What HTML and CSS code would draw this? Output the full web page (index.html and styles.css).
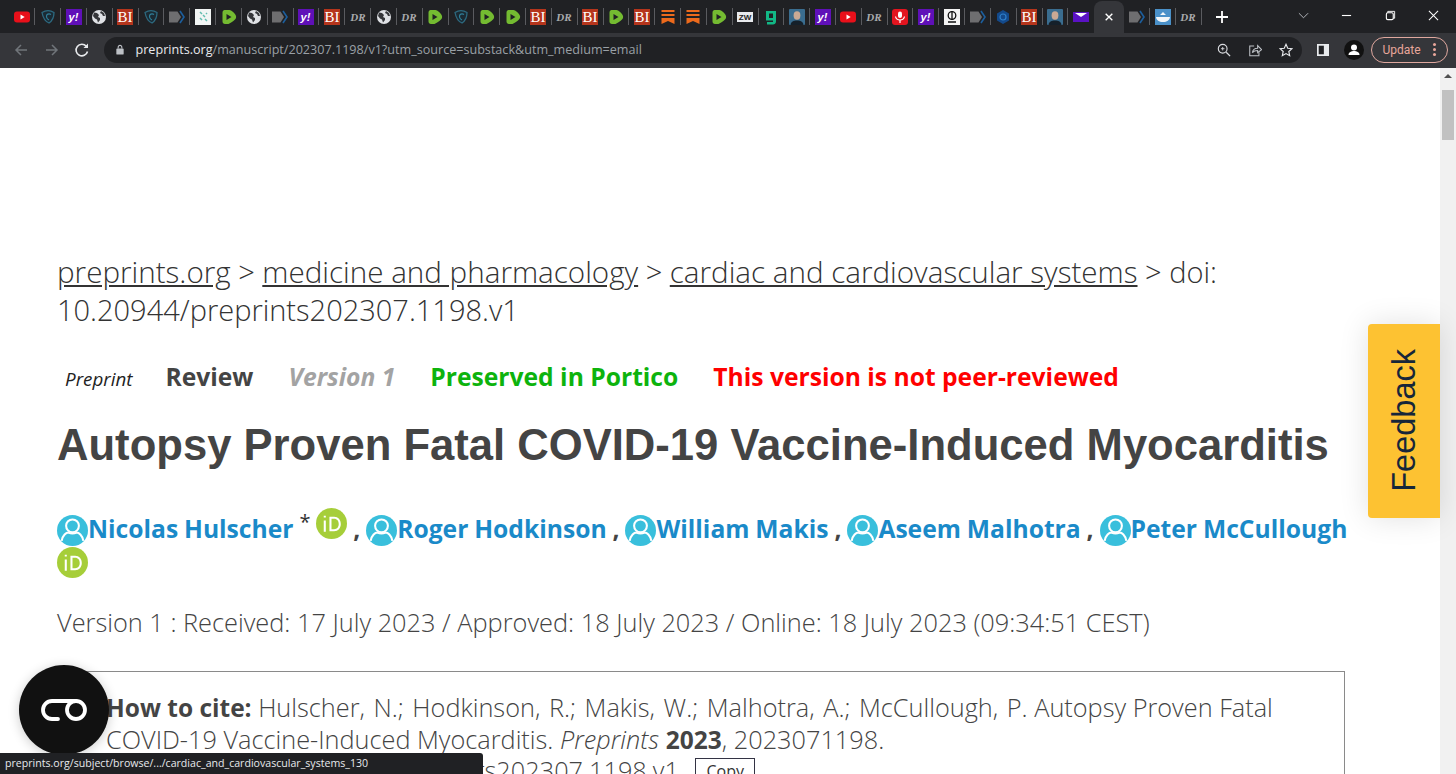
FILE: index.html
```html
<!DOCTYPE html>
<html lang="en">
<head>
    <meta charset="UTF-8">
    <meta name="viewport" content="width=device-width, initial-scale=1.0">
    <title>Autopsy Proven Fatal COVID-19 Vaccine-Induced Myocarditis</title>
    <link rel="stylesheet" href="styles.css">
</head>
<body>
    <svg class="sprites" width="0" height="0">
        <symbol id="yt" viewBox="0 0 16 16"><rect y="2.500" width="16" height="11" rx="3" fill="#e8101a"/><path d="M6.500 5.600l4.200 2.400-4.200 2.400z" fill="#fff"/></symbol>
        <symbol id="shield" viewBox="0 0 16 16"><path d="M2 3.500c4-2.500 8-2.500 12 0 0 5-2 8.500-5 10.500C5 12.500 3 9 2 3.500z" fill="#1b2a33" stroke="#2d6a80" stroke-width="1.300"/><path d="M11 5.500c-2-1.200-5-.5-4.500 2.500.3 1.500 1.500 2.500 2.500 3" fill="none" stroke="#2f7f99" stroke-width="1.200"/></symbol>
        <symbol id="yahoo" viewBox="0 0 16 16"><rect width="16" height="16" fill="#5f10b8"/><text x="7.500" y="12" text-anchor="middle" class="ico-y">y!</text></symbol>
        <symbol id="globe" viewBox="0 0 16 16"><circle cx="8" cy="8" r="7" fill="#dfe1e5"/><path d="M3 3.500l3 .5 2 2-1 2 2 1v2l-2 2.500-1-3-2-1-2-2.500zM10 2l3 2 1 3-2 0-1-2-2-1z" fill="#35363a"/></symbol>
        <symbol id="bi" viewBox="0 0 16 16"><rect width="16" height="16" fill="#b5351c"/><text x="8" y="13" text-anchor="middle" class="ico-bi">BI</text></symbol>
        <symbol id="chev" viewBox="0 0 16 16"><path d="M0 2.500h8.500l3.500 5.500-3.500 5.500H0z" fill="#6e6e70"/><path d="M11 2l4 6-4 6" fill="none" stroke="#1c5f9e" stroke-width="1.600"/></symbol>
        <symbol id="gem" viewBox="0 0 16 16"><rect width="16" height="16" fill="#f2f5f4"/><path d="M5 3l2 2M8 6l2 2M5 9l2 2M10 10l2 2M11 4l1 1" stroke="#62bdb0" stroke-width="1.500"/></symbol>
        <symbol id="rumble" viewBox="0 0 16 16"><path d="M3.500 1h5c1.500 0 6 3.500 6.500 6 .3 1.500 0 2.500-1 3.500-2 2-5 4-6.500 4.500H4c-1.500 0-2.500-1-2.500-2.500v-9C1.500 2 2.500 1 3.500 1z" fill="#74bb31"/><path d="M5.500 5v6l5-3z" fill="#202124"/></symbol>
        <symbol id="dr" viewBox="0 0 16 16"><text x="8" y="12" text-anchor="middle" class="ico-dr">DR</text></symbol>
        <symbol id="ribbon" viewBox="0 0 16 16"><path d="M1.500 1h13v2h-13zM1.500 5h13v2h-13zM1.500 9h13v6L8 12l-6.500 3z" fill="#ec6a1c"/></symbol>
        <symbol id="zw" viewBox="0 0 16 16"><rect y="3" width="16" height="10" fill="#e8eaed"/><text x="8" y="11" text-anchor="middle" class="ico-zw">ZW</text></symbol>
        <symbol id="g" viewBox="0 0 16 16"><path d="M3 2h10v10.500c0 2-1.500 3-3 3H4v-2.500h6v-1.500H3zM6 4.500v4.500h4V4.500z" fill="#12b886" fill-rule="evenodd"/></symbol>
        <symbol id="face" viewBox="0 0 16 16"><rect width="16" height="16" rx="1" fill="#3a6d8f"/><ellipse cx="8" cy="6.500" rx="3.400" ry="4.200" fill="#c9a994"/><path d="M1.500 16c.5-3.500 3-4.500 6.500-4.500s6 1 6.500 4.500z" fill="#15202a"/></symbol>
        <symbol id="mic" viewBox="0 0 16 16"><rect width="16" height="16" rx="3" fill="#e3141f"/><rect x="6" y="2.500" width="4" height="6.500" rx="2" fill="#fff"/><path d="M3.500 7.500c.5 2.500 2.500 3.500 4.500 3.500s4-1 4.500-3.500M8 11v3" fill="none" stroke="#fff" stroke-width="1.200"/></symbol>
        <symbol id="cp" viewBox="0 0 16 16"><rect width="16" height="16" fill="#f4f4f4"/><circle cx="8" cy="6.500" r="3.800" fill="none" stroke="#111" stroke-width="1.300"/><path d="M8 2v9M4 13h8" stroke="#111" stroke-width="1.300"/></symbol>
        <symbol id="hex" viewBox="0 0 16 16"><path d="M8 1l6 3.500v7L8 15l-6-3.500v-7z" fill="#13498a"/><circle cx="8" cy="8" r="3" fill="none" stroke="#2f7fc9" stroke-width="1.200"/></symbol>
        <symbol id="mail" viewBox="0 0 16 16"><rect y="3" width="16" height="10" fill="#5a12c4"/><path d="M2 4h12L8 8z" fill="#fff"/></symbol>
        <symbol id="whale" viewBox="0 0 16 16"><rect width="16" height="16" fill="#4a90c8"/><path d="M1 8h14c-.5 3.500-3 5-7 5S1.500 11.500 1 8zM5 6l3-3 3 3z" fill="#f2f6f8"/></symbol>
        <symbol id="person" viewBox="0 0 30 30"><circle cx="15" cy="15" r="15" fill="#39bfdc"/><circle cx="15" cy="10.500" r="6.200" fill="none" stroke="#fff" stroke-width="2"/><path d="M4.500 25c1-5.500 4.500-8 6.500-8 2.500 1.200 5.500 1.200 8 0 2 0 5.500 2.500 6.500 8" fill="none" stroke="#fff" stroke-width="2"/></symbol>
        <symbol id="orcid" viewBox="0 0 30 30"><circle cx="15" cy="15" r="15" fill="#a6ce39"/><path d="M8.500 12v11M8.500 7.500v1.800" stroke="#fff" stroke-width="2"/><path d="M13 8.500h4.500c4 0 6.500 3 6.500 7s-2.500 7-6.500 7H13zM15 10.500v10h2.500c3 0 4.500-2.300 4.500-5s-1.500-5-4.500-5z" fill="#fff" fill-rule="evenodd"/></symbol>
    </svg>

    <header class="chrome">
        <div class="tabstrip">
            <div class="tabs">
                <span class="tab"><svg><use href="#yt"/></svg></span>
                <span class="tab"><svg><use href="#shield"/></svg></span>
                <span class="tab"><svg><use href="#yahoo"/></svg></span>
                <span class="tab"><svg><use href="#globe"/></svg></span>
                <span class="tab"><svg><use href="#bi"/></svg></span>
                <span class="tab"><svg><use href="#shield"/></svg></span>
                <span class="tab"><svg><use href="#chev"/></svg></span>
                <span class="tab"><svg><use href="#gem"/></svg></span>
                <span class="tab"><svg><use href="#rumble"/></svg></span>
                <span class="tab"><svg><use href="#globe"/></svg></span>
                <span class="tab"><svg><use href="#chev"/></svg></span>
                <span class="tab"><svg><use href="#yahoo"/></svg></span>
                <span class="tab"><svg><use href="#bi"/></svg></span>
                <span class="tab"><svg><use href="#dr"/></svg></span>
                <span class="tab"><svg><use href="#globe"/></svg></span>
                <span class="tab"><svg><use href="#dr"/></svg></span>
                <span class="tab"><svg><use href="#rumble"/></svg></span>
                <span class="tab"><svg><use href="#shield"/></svg></span>
                <span class="tab"><svg><use href="#rumble"/></svg></span>
                <span class="tab"><svg><use href="#rumble"/></svg></span>
                <span class="tab"><svg><use href="#bi"/></svg></span>
                <span class="tab"><svg><use href="#dr"/></svg></span>
                <span class="tab"><svg><use href="#bi"/></svg></span>
                <span class="tab"><svg><use href="#rumble"/></svg></span>
                <span class="tab"><svg><use href="#bi"/></svg></span>
                <span class="tab"><svg><use href="#ribbon"/></svg></span>
                <span class="tab"><svg><use href="#ribbon"/></svg></span>
                <span class="tab"><svg><use href="#rumble"/></svg></span>
                <span class="tab"><svg><use href="#zw"/></svg></span>
                <span class="tab"><svg><use href="#g"/></svg></span>
                <span class="tab"><svg><use href="#face"/></svg></span>
                <span class="tab"><svg><use href="#yahoo"/></svg></span>
                <span class="tab"><svg><use href="#yt"/></svg></span>
                <span class="tab"><svg><use href="#dr"/></svg></span>
                <span class="tab"><svg><use href="#mic"/></svg></span>
                <span class="tab"><svg><use href="#yahoo"/></svg></span>
                <span class="tab"><svg><use href="#cp"/></svg></span>
                <span class="tab"><svg><use href="#chev"/></svg></span>
                <span class="tab"><svg><use href="#hex"/></svg></span>
                <span class="tab"><svg><use href="#bi"/></svg></span>
                <span class="tab"><svg><use href="#face"/></svg></span>
                <span class="tab tab-last"><svg><use href="#mail"/></svg></span>
                <span class="tab-active"><svg viewBox="0 0 12 12"><path d="M2 2l8 8M10 2l-8 8" stroke="#fff" stroke-width="1.600"/></svg></span>
                <span class="tab"><svg><use href="#chev"/></svg></span>
                <span class="tab"><svg><use href="#whale"/></svg></span>
                <span class="tab"><svg><use href="#dr"/></svg></span>
            </div>
            <svg class="newtab" viewBox="0 0 12 12"><path d="M6 0v12M0 6h12" stroke="#fff" stroke-width="1.800"/></svg>
            <div class="winbtns">
                <svg viewBox="0 0 12 12"><path d="M1 3.500l5 5 5-5" fill="none" stroke="#bdc1c6"/></svg>
                <svg viewBox="0 0 12 12"><path d="M1 6h10" stroke="#fff" stroke-width="1.200"/></svg>
                <svg viewBox="0 0 12 12"><path d="M3 3V1.500h7.500V9H9" fill="none" stroke="#fff"/><rect x="1.500" y="3" width="7.500" height="7.500" rx="1.500" fill="none" stroke="#fff" stroke-width="1.200"/></svg>
                <svg viewBox="0 0 12 12"><path d="M1 1l10 10M11 1L1 11" stroke="#fff" stroke-width="1.100"/></svg>
            </div>
        </div>
        <div class="toolbar">
            <svg class="nav" viewBox="0 0 16 16"><path d="M14 8H3M8 3L3 8l5 5" fill="none" stroke="#70757a" stroke-width="1.500"/></svg>
            <svg class="nav" viewBox="0 0 16 16"><path d="M2 8h11M8 3l5 5-5 5" fill="none" stroke="#70757a" stroke-width="1.500"/></svg>
            <svg class="nav" viewBox="0 0 16 16"><path d="M13.500 9.500a5.800 5.800 0 1 1-1.200-5.200" fill="none" stroke="#e8eaed" stroke-width="1.600"/><path d="M14 1.500V6H9.500z" fill="#e8eaed"/></svg>
            <div class="omnibox">
                <svg class="lock" viewBox="0 0 10 12"><rect x="1" y="5" width="8" height="6.500" rx="1" fill="#bdc1c6"/><path d="M3 5V3.500a2 2 0 0 1 4 0V5" fill="none" stroke="#bdc1c6" stroke-width="1.200"/></svg>
                <span class="url"><b>preprints.org</b>/manuscript/202307.1198/v1?utm_source=substack&amp;utm_medium=email</span>
                <svg class="omni-ico" viewBox="0 0 16 16"><circle cx="6.500" cy="6.500" r="5" fill="none" stroke="#dadce0" stroke-width="1.300"/><path d="M10.500 10.500L15 15" stroke="#dadce0" stroke-width="1.500"/><path d="M6.500 4.500v4M4.500 6.500h4" stroke="#dadce0"/></svg>
                <svg class="omni-ico" viewBox="0 0 16 16"><path d="M7 3.500H2v11h10.500v-4" fill="none" stroke="#bdc1c6" stroke-width="1.200"/><path d="M5 11c.5-3.500 3-5 6-5V3l4.500 4.500L11 11V8.500C9 8.500 6.500 9 5 11z" fill="none" stroke="#bdc1c6" stroke-width="1.200"/></svg>
                <svg class="omni-ico" viewBox="0 0 16 16"><path d="M8 1.500l2 4.500 4.800.5-3.600 3.200 1 4.800L8 12.100l-4.200 2.400 1-4.800L1.200 6.500 6 6z" fill="none" stroke="#e8eaed" stroke-width="1.300"/></svg>
            </div>
            <svg class="side" viewBox="0 0 14 14"><rect width="14" height="14" fill="#e8eaed"/><rect x="2" y="2" width="6" height="10" fill="#202124"/></svg>
            <svg class="avatar" viewBox="0 0 20 20"><circle cx="10" cy="10" r="10" fill="#111"/><circle cx="10" cy="7.500" r="3" fill="#fff"/><path d="M4.500 15c0-3 3-4 5.500-4s5.500 1 5.500 4z" fill="#fff"/></svg>
            <div class="update"><span>Update</span><i class="dots"></i></div>
        </div>
    </header>

    <div class="viewport">
        <main class="page">
            <p class="crumbs"><a href="#">preprints.org</a> &gt; <a href="#">medicine and pharmacology</a> &gt; <a href="#">cardiac and cardiovascular systems</a> &gt; doi: 10.20944/preprints202307.1198.v1</p>
            <div class="badges">
                <em class="b-type">Preprint</em>
                <b class="b-review">Review</b>
                <em class="b-version">Version 1</em>
                <b class="b-portico">Preserved in Portico</b>
                <b class="b-peer">This version is not peer-reviewed</b>
            </div>
            <h1>Autopsy Proven Fatal COVID-19 Vaccine-Induced Myocarditis</h1>
            <div class="authors">
                <a href="#"><svg class="face"><use href="#person"/></svg>Nicolas Hulscher</a> <sup>*</sup> <svg class="orcid orcid-up"><use href="#orcid"/></svg> <span class="sep">,</span>
                <a href="#"><svg class="face"><use href="#person"/></svg>Roger Hodkinson</a> <span class="sep">,</span>
                <a href="#"><svg class="face"><use href="#person"/></svg>William Makis</a> <span class="sep">,</span>
                <a href="#"><svg class="face"><use href="#person"/></svg>Aseem Malhotra</a> <span class="sep">,</span>
                <a href="#"><svg class="face"><use href="#person"/></svg>Peter McCullough</a> <svg class="orcid"><use href="#orcid"/></svg>
            </div>
            <p class="dates">Version 1 : Received: 17 July 2023 / Approved: 18 July 2023 / Online: 18 July 2023 (09:34:51 CEST)</p>
            <div class="cite">
                <p><b>How to cite:</b> <span class="names">Hulscher, N.; Hodkinson, R.; Makis, W.; Malhotra, A.; McCullough, P.</span> Autopsy Proven Fatal COVID-19 Vaccine-Induced Myocarditis. <em>Preprints</em> <b>2023</b>, 2023071198.</p>
                <p>https://doi.org/10.20944/preprints202307.1198.v1 <button class="copy">Copy</button></p>
            </div>
        </main>
        <div class="scrollbar"><i class="arrow"></i><div class="thumb"></div></div>
        <button class="feedback"><span>Feedback</span></button>
        <div class="fab"><svg viewBox="0 0 46 22"><path d="M17 20H11a9 9 0 0 1 0-18h24" fill="none" stroke="#fff" stroke-width="3.800" stroke-linecap="round"/><circle cx="35" cy="11" r="9" fill="none" stroke="#fff" stroke-width="3.800"/></svg></div>
        <div class="status">preprints.org/subject/browse/.../cardiac_and_cardiovascular_systems_130</div>
    </div>
</body>
</html>
```

FILE: styles.css
```css
* {
    box-sizing: border-box;
}
html, body {
    margin: 0;
    height: 100%;
    overflow: hidden;
}
body {
    font-family: "Open Sans", sans-serif;
    background: #fff;
    display: flex;
    flex-direction: column;
}
.sprites {
    display: none;
}

/* browser chrome */
.chrome {
    flex: none;
    height: 68px;
    background: #35363a;
}
.tabstrip {
    height: 33px;
    background: #202124;
    display: flex;
    align-items: center;
    padding-left: 9.500px;
}
.tabs {
    display: flex;
    align-items: center;
    height: 100%;
}
.tab {
    width: 25.83px;
    height: 17px;
    display: flex;
    align-items: center;
    justify-content: center;
    border-right: 1px solid #5a5b5f;
}
.tab svg {
    width: 16px;
    height: 16px;
}
.tab-last {
    border-right: none;
}
.tab-active {
    width: 30px;
    height: 33px;
    margin-top: 1px;
    background: #35363a;
    border-radius: 8px 8px 0 0;
    display: flex;
    align-items: center;
    justify-content: center;
}
.tab-active svg {
    width: 10px;
    height: 10px;
}
.newtab {
    width: 12px;
    height: 12px;
    margin-left: 14px;
}
.winbtns {
    margin-left: auto;
    display: flex;
    align-items: center;
    gap: 32.5px;
    padding: 0 17px 2px 0;
}
.winbtns svg {
    width: 11px;
    height: 11px;
}
.ico-y {
    font: italic 700 11px "Liberation Sans", sans-serif;
    fill: #fff;
}
.ico-bi {
    font: 400 15px "Liberation Serif", serif;
    fill: #fff;
}
.ico-dr {
    font: italic 700 11px "Liberation Serif", serif;
    fill: #a9aaac;
}
.ico-zw {
    font: 900 8px "Liberation Sans", sans-serif;
    fill: #222;
}
.toolbar {
    height: 33px;
    display: flex;
    align-items: center;
    padding: 0 8px 0 13px;
}
.nav {
    width: 16px;
    height: 16px;
    margin-right: 14.500px;
}
.omnibox {
    width: 1198px;
    height: 26px;
    margin-left: -1px;
    background: #202124;
    border-radius: 13px;
    display: flex;
    align-items: center;
    padding: 0 9px 0 11px;
}
.lock {
    width: 10px;
    height: 11px;
    margin-right: 11px;
}
.url {
    flex: 1;
    font: 12.600px "Open Sans", sans-serif;
    color: #9aa0a6;
    white-space: nowrap;
}
.url b {
    font-weight: 400;
    color: #e8eaed;
}
.omni-ico {
    width: 14px;
    height: 14px;
    margin-left: 17px;
}
.side {
    width: 12px;
    height: 12px;
    margin-left: 15px;
}
.avatar {
    width: 20px;
    height: 20px;
    margin-left: 15px;
}
.update {
    width: 77px;
    height: 26px;
    margin-left: 7px;
    border: 1px solid #e0a89f;
    border-radius: 13px;
    display: flex;
    align-items: center;
    justify-content: space-between;
    padding: 0 11px 0 11px;
    font: 12px "Roboto", sans-serif;
    color: #e8a69a;
}
.dots {
    width: 3px;
    height: 3px;
    border-radius: 50%;
    background: #e8a69a;
    box-shadow: 0 -5px 0 #e8a69a, 0 5px 0 #e8a69a;
}

/* page */
.viewport {
    flex: 1;
    position: relative;
    overflow: hidden;
}
.page {
    width: 1440px;
    padding: 185px 0 0 57px;
    color: #444;
    font-weight: 300;
}
.page b {
    font-weight: 700;
}
.crumbs {
    margin: 0;
    width: 1240px;
    font-size: 29px;
    line-height: 38px;
    color: #333;
}
.crumbs a {
    font-size: 29.600px;
    color: #333;
}
.badges {
    display: flex;
    align-items: baseline;
    height: 38px;
    margin-top: 29px;
    padding: 0 0 0 8px;
    font-size: 24.650px;
    line-height: 38px;
}
.b-type {
    font-size: 18.800px;
    font-weight: 400;
    color: #222;
    margin-right: 33px;
}
.b-review {
    margin-right: 35px;
}
.b-version {
    font-weight: 700;
    color: #a3a3a3;
    margin-right: 35px;
}
.b-portico {
    color: #0db30d;
    margin-right: 35px;
}
.b-peer {
    color: #f00;
}
h1 {
    margin: 19px 0 0;
    font: 700 43.600px/60px "Liberation Sans", sans-serif;
    color: #444;
    white-space: nowrap;
}
.authors {
    margin-top: 33px;
    width: 1310px;
    font-size: 24.650px;
    font-weight: 700;
    line-height: 33px;
    word-spacing: -0.5px;
    color: #444;
}
.authors a {
    color: #1a8ac9;
    text-decoration: none;
}
.face, .orcid {
    width: 31px;
    height: 31px;
    vertical-align: -8px;
}
.orcid {
    vertical-align: -6px;
}
.orcid-up {
    vertical-align: -1px;
}
sup {
    font-size: 20px;
    font-weight: 400;
    line-height: 0;
    color: #333;
}
.dates {
    margin: 25px 0 0;
    font-size: 25.350px;
    line-height: 36px;
}
.cite {
    width: 1288px;
    margin-top: 31px;
    padding: 20px 40px 0 48px;
    border: 1px solid #8a8a8a;
    font-size: 25.300px;
    line-height: 31.500px;
}
.cite p {
    margin: 0;
}
.cite b {
    font-size: 24.500px;
}
.names {
    word-spacing: 2px;
}
.copy {
    font: 16px "Open Sans", sans-serif;
    color: #333;
    background: #fff;
    border: 1.500px solid #334;
    padding: 1px 10px;
    margin-left: 10px;
    vertical-align: 3px;
}

/* floating things */
.scrollbar {
    position: absolute;
    top: 0;
    right: 0;
    bottom: 0;
    width: 16px;
    background: #f1f1f1;
    padding-top: 6px;
}
.arrow {
    display: block;
    width: 0;
    margin: 0 auto 12px;
    border: 4px solid transparent;
    border-top: none;
    border-bottom: 4px solid #505050;
}
.thumb {
    height: 50px;
    margin: 0 2px;
    background: #c1c1c1;
}
.feedback {
    position: absolute;
    left: 1368px;
    top: 256px;
    width: 72px;
    height: 194px;
    padding: 7px 0 0;
    border: none;
    border-radius: 4px 0 0 4px;
    background: #fdc232;
    box-shadow: 0 0 30px rgba(0, 0, 0, 0.12);
    font: 32.500px "Liberation Sans", sans-serif;
    color: #16263a;
}
.feedback span {
    display: inline-block;
    writing-mode: vertical-rl;
    transform: rotate(180deg);
}
.fab {
    position: absolute;
    left: 19px;
    top: 597px;
    width: 90px;
    height: 90px;
    border-radius: 50%;
    background: #111;
    box-shadow: 0 2px 12px rgba(0, 0, 0, 0.2);
    display: flex;
    align-items: center;
    justify-content: center;
}
.fab svg {
    width: 46px;
    height: 22px;
}
.status {
    position: absolute;
    left: 0;
    bottom: 0;
    width: 483px;
    height: 21px;
    padding-left: 5px;
    background: #202124;
    border-radius: 0 3px 0 0;
    color: #e8eaed;
    font: 10.600px/21px "Open Sans", sans-serif;
}
```
